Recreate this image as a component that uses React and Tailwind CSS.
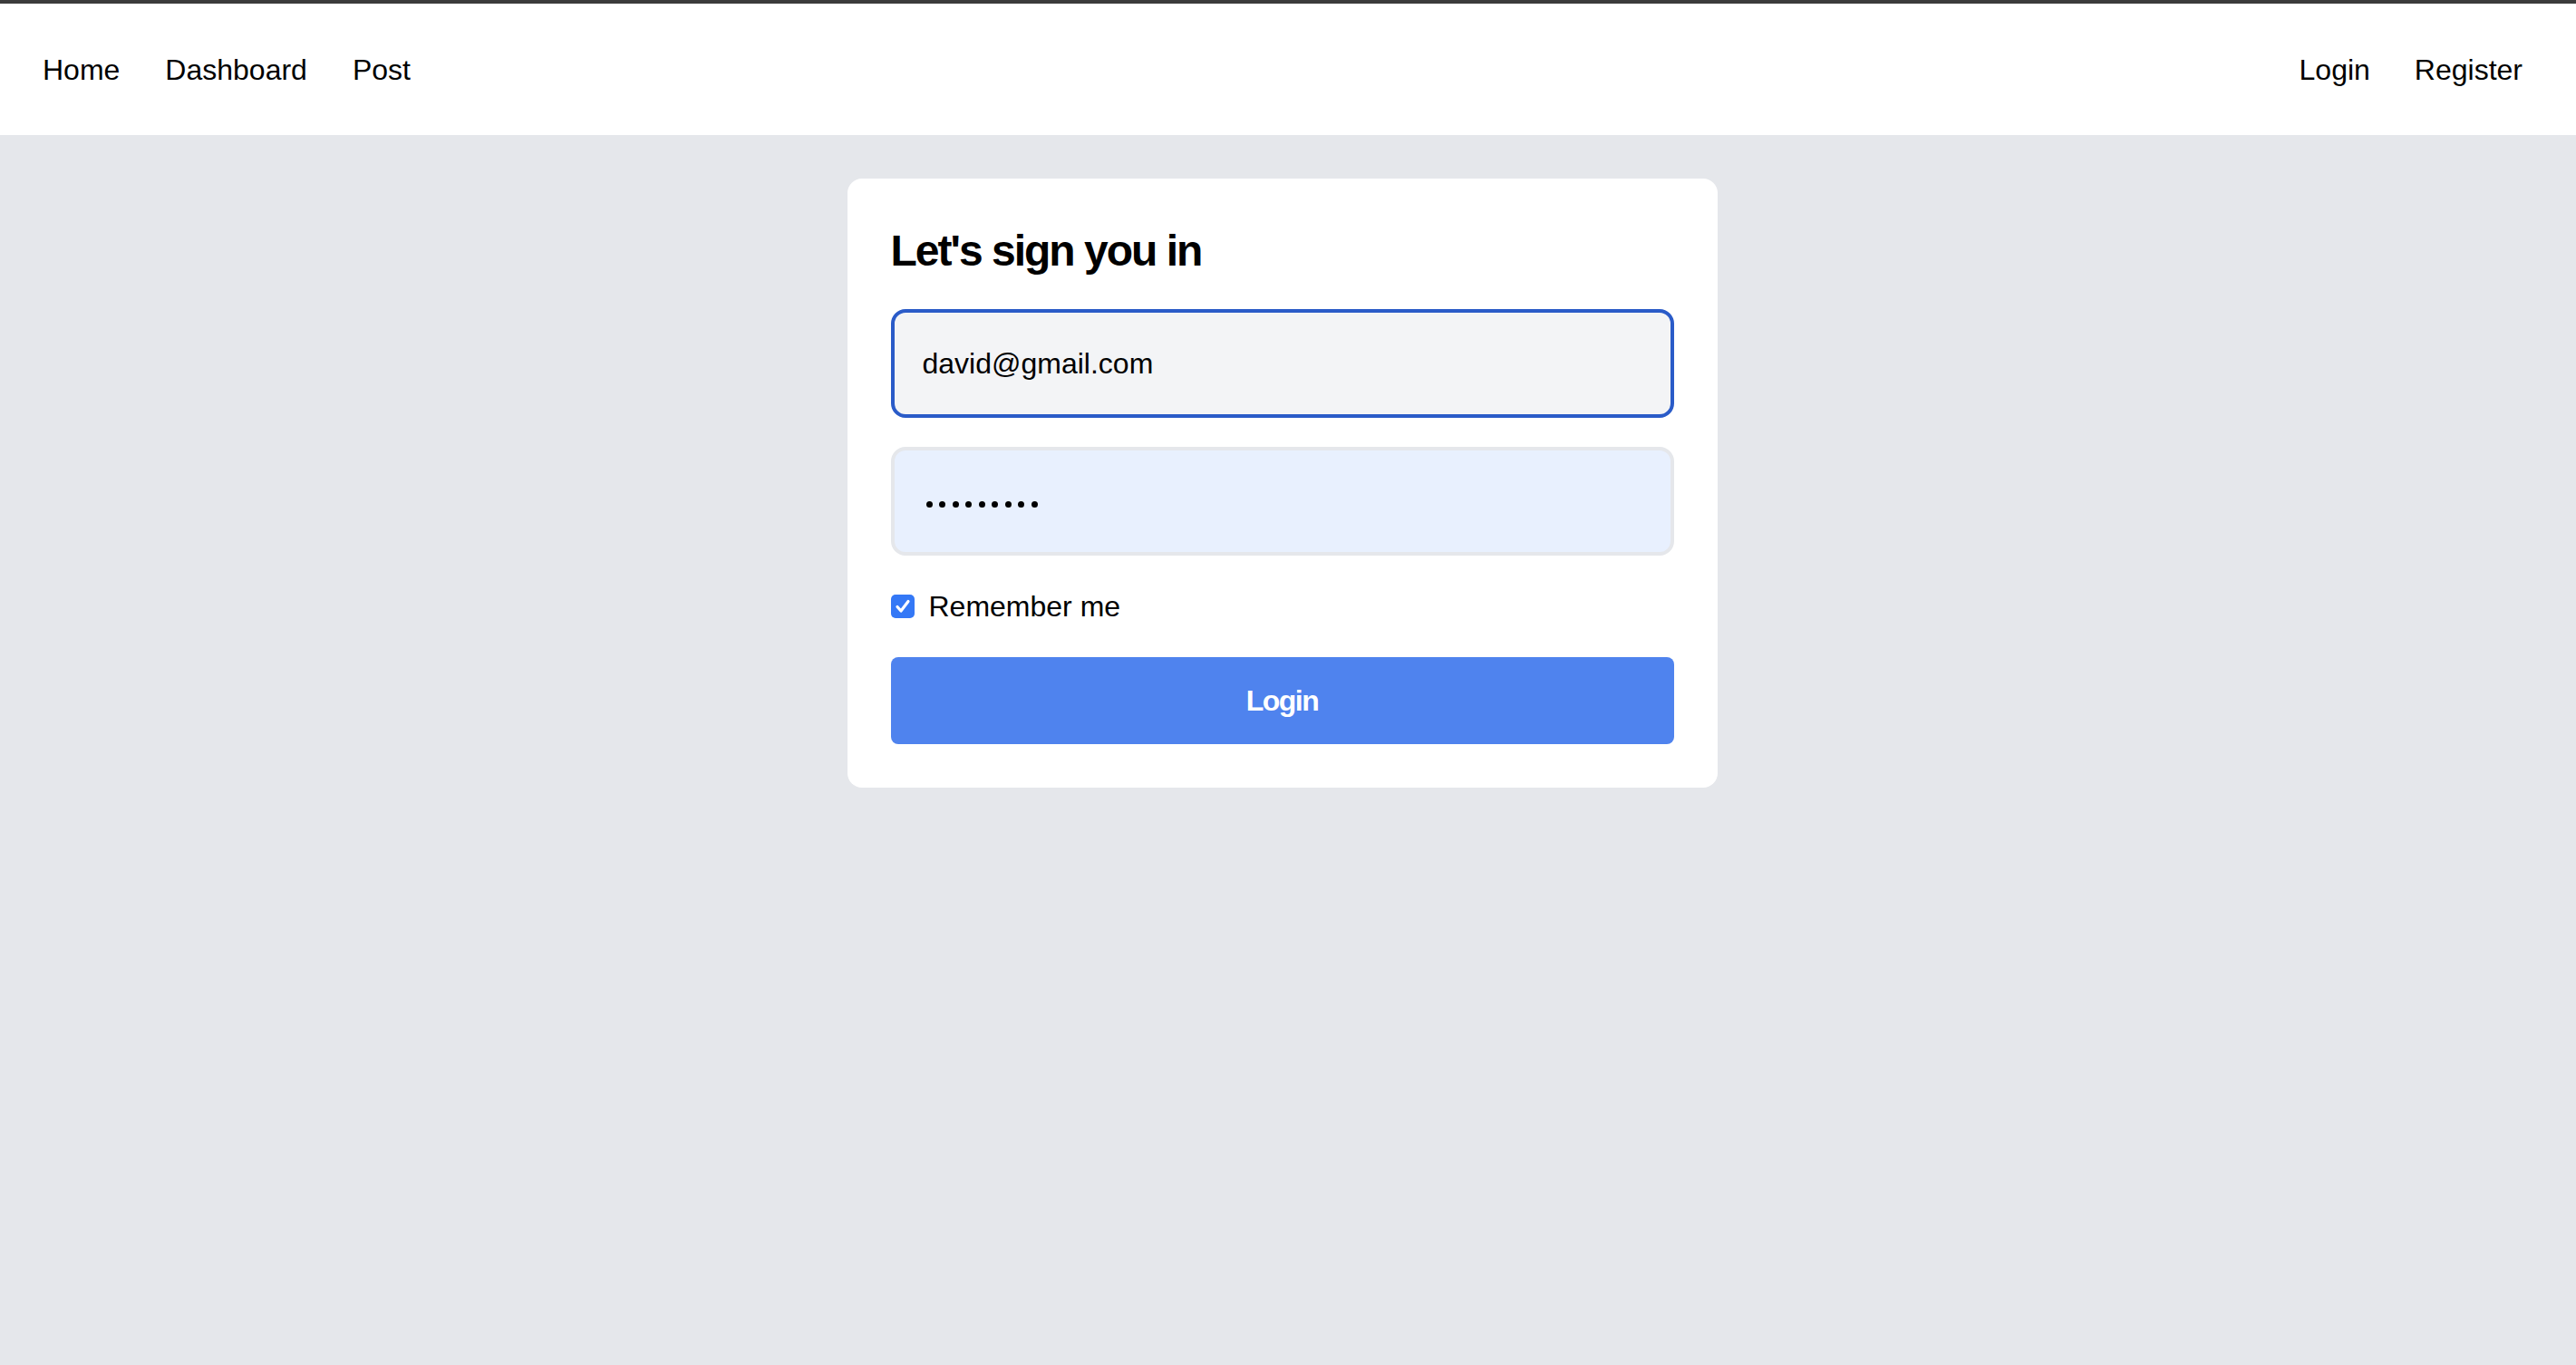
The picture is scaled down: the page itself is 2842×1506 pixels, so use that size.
import React from "react";

export default function App() {
  return (
    <div className="min-h-screen bg-[#e5e7eb] font-['Liberation_Sans',Arial,sans-serif] text-black">
      <div className="h-[4px] bg-[#3c3c3c]" />
      <nav className="h-[145px] bg-white flex items-center justify-between pl-[47px] pr-[59px] text-[32px] leading-[48px]">
        <div className="flex items-center gap-[50px]">
          <a>Home</a>
          <a>Dashboard</a>
          <a>Post</a>
        </div>
        <div className="flex items-center gap-[49px]">
          <a>Login</a>
          <a>Register</a>
        </div>
      </nav>
      <main className="flex justify-center pt-[48px] pr-[13px]">
        <div className="w-[960px] bg-white rounded-[16px] p-[48px] flex flex-col gap-[32px]">
          <h1 className="text-[48px] leading-[64px] font-bold tracking-[-2px]">Let's sign you in</h1>
          <div className="h-[120px] border-4 border-[#2a5bc8] rounded-[16px] bg-[#f3f4f6] pl-[31px] flex items-center text-[32px] leading-[48px]">
            david@gmail.com
          </div>
          <div className="h-[120px] border-4 border-[#e5e7eb] rounded-[16px] bg-[#e8f0fe] pl-[35px] pt-[6px] flex items-center gap-[7.5px]">
            {Array.from({ length: 9 }).map((_, i) => (
              <span key={i} className="block w-[7px] h-[7px] rounded-full bg-black" />
            ))}
          </div>
          <label className="flex items-center gap-[16px] text-[32px] leading-[48px]">
            <span className="w-[26px] h-[26px] rounded-[5px] bg-[#3478f6] flex items-center justify-center">
              <svg width="20" height="20" viewBox="0 0 20 20" fill="none">
                <path d="M4 10.5 L8 15 L16 4.5" stroke="white" strokeWidth="3.2" strokeLinecap="round" strokeLinejoin="round" />
              </svg>
            </span>
            Remember me
          </label>
          <button className="h-[96px] w-full bg-[#4f83ee] rounded-[8px] text-white text-[32px] font-bold tracking-[-1.5px]">
            Login
          </button>
        </div>
      </main>
    </div>
  );
}
